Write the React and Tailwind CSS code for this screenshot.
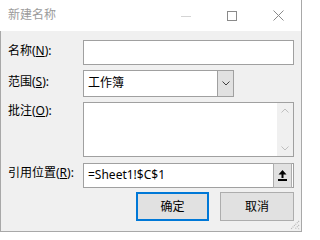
export default function App() {
  return (
    <div className="relative w-[302px] h-[232px] flex flex-col bg-[#f0f0f0] border-r border-b border-[#a8a8a8] text-[12px] leading-[16px] text-black font-['Noto_Sans','Noto_Sans_CJK_SC',sans-serif]">
      {/* Title bar */}
      <div className="h-[31px] shrink-0 bg-white flex items-stretch">
        <div className="flex-1 pl-2 pt-[7px] text-[#9b9b9b]">新建名称</div>
        <div className="w-[46px] flex items-center justify-center">
          <svg width="10" height="10" viewBox="0 0 10 10">
            <line x1="0" y1="5.5" x2="10" y2="5.5" stroke="#d4d4d4" strokeWidth="1" />
          </svg>
        </div>
        <div className="w-[46px] flex items-center justify-center">
          <svg width="10" height="10" viewBox="0 0 10 10">
            <rect x="0.5" y="0.5" width="9" height="9" fill="none" stroke="#8a8a8a" strokeWidth="1" />
          </svg>
        </div>
        <div className="w-[46px] flex items-center justify-center">
          <svg width="11" height="11" viewBox="0 0 11 11">
            <path d="M0.5 0.5 L10.5 10.5 M10.5 0.5 L0.5 10.5" stroke="#8a8a8a" strokeWidth="1" />
          </svg>
        </div>
      </div>

      {/* Body */}
      <div className="flex-1 flex flex-col border-l border-[#a8a8a8] px-[7px] pt-[9px]">
        {/* Row 1 */}
        <div className="flex h-[25px]">
          <div className="w-[75px] pt-[3px]">名称(<span className="underline">N</span>):</div>
          <div className="flex-1 bg-white border border-[#a0a0a0]" />
        </div>

        {/* Row 2 */}
        <div className="flex h-[27px] mt-[5px]">
          <div className="w-[75px] pt-[4px]">范围(<span className="underline">S</span>):</div>
          <div className="w-[151px] flex bg-white border border-[#a0a0a0]">
            <div className="flex-1 pl-[4px] pt-[4px]">工作簿</div>
            <div className="w-[17px] -my-px -mr-px bg-[#e1e1e1] border border-[#a0a0a0] flex items-center justify-center">
              <svg width="8" height="5" viewBox="0 0 8 5">
                <path d="M0.5 0.5 L4 4 L7.5 0.5" fill="none" stroke="#404040" strokeWidth="1" />
              </svg>
            </div>
          </div>
        </div>

        {/* Row 3 */}
        <div className="flex h-[55px] mt-[5px]">
          <div className="w-[75px] pt-[1px]">批注(<span className="underline">O</span>):</div>
          <div className="flex-1 flex bg-white border border-[#a0a0a0]">
            <div className="flex-1" />
            <div className="w-[16px] bg-[#f0f0f0] flex flex-col justify-between items-center py-[5px]">
              <svg width="8" height="5" viewBox="0 0 8 5">
                <path d="M0.5 4.5 L4 1 L7.5 4.5" fill="none" stroke="#bfbfbf" strokeWidth="1" />
              </svg>
              <svg width="8" height="5" viewBox="0 0 8 5">
                <path d="M0.5 0.5 L4 4 L7.5 0.5" fill="none" stroke="#bfbfbf" strokeWidth="1" />
              </svg>
            </div>
          </div>
        </div>

        {/* Row 4 */}
        <div className="flex h-[25px] mt-[6px]">
          <div className="w-[75px] pt-[2px]">引用位置(<span className="underline">R</span>):</div>
          <div className="flex-1 flex bg-white border border-[#a0a0a0]">
            <div className="flex-1 pl-[4px] pt-[3px]">=Sheet1!$C$1</div>
            <div className="w-[19px] -my-px mr-[1px] bg-[#e1e1e1] border border-[#adadad] flex items-center justify-center">
              <svg width="9" height="11" viewBox="0 0 9 11">
                <path d="M4.5 0 L0.5 4.5 L3.5 4.5 L3.5 8 L5.5 8 L5.5 4.5 L8.5 4.5 Z" fill="#000" />
                <rect x="0" y="9" width="9" height="2" fill="#000" />
              </svg>
            </div>
          </div>
        </div>

        {/* Buttons */}
        <div className="flex justify-end gap-[11px] mt-[4px]">
          <div className="w-[73px] h-[29px] bg-[#e1e1e1] border-2 border-[#0078d7] flex items-center justify-center">确定</div>
          <div className="w-[74px] h-[29px] bg-[#e1e1e1] border border-[#adadad] flex items-center justify-center">取消</div>
        </div>
      </div>

      {/* Resize grip */}
      <svg className="absolute right-[1px] bottom-[1px]" width="11" height="11" viewBox="0 0 11 11">
        <path d="M10 2 L2 10 M10 6 L6 10 M10 9.5 L9.5 10" stroke="#b5b5b5" strokeWidth="1.2" strokeDasharray="1 1" />
      </svg>
    </div>
  );
}
